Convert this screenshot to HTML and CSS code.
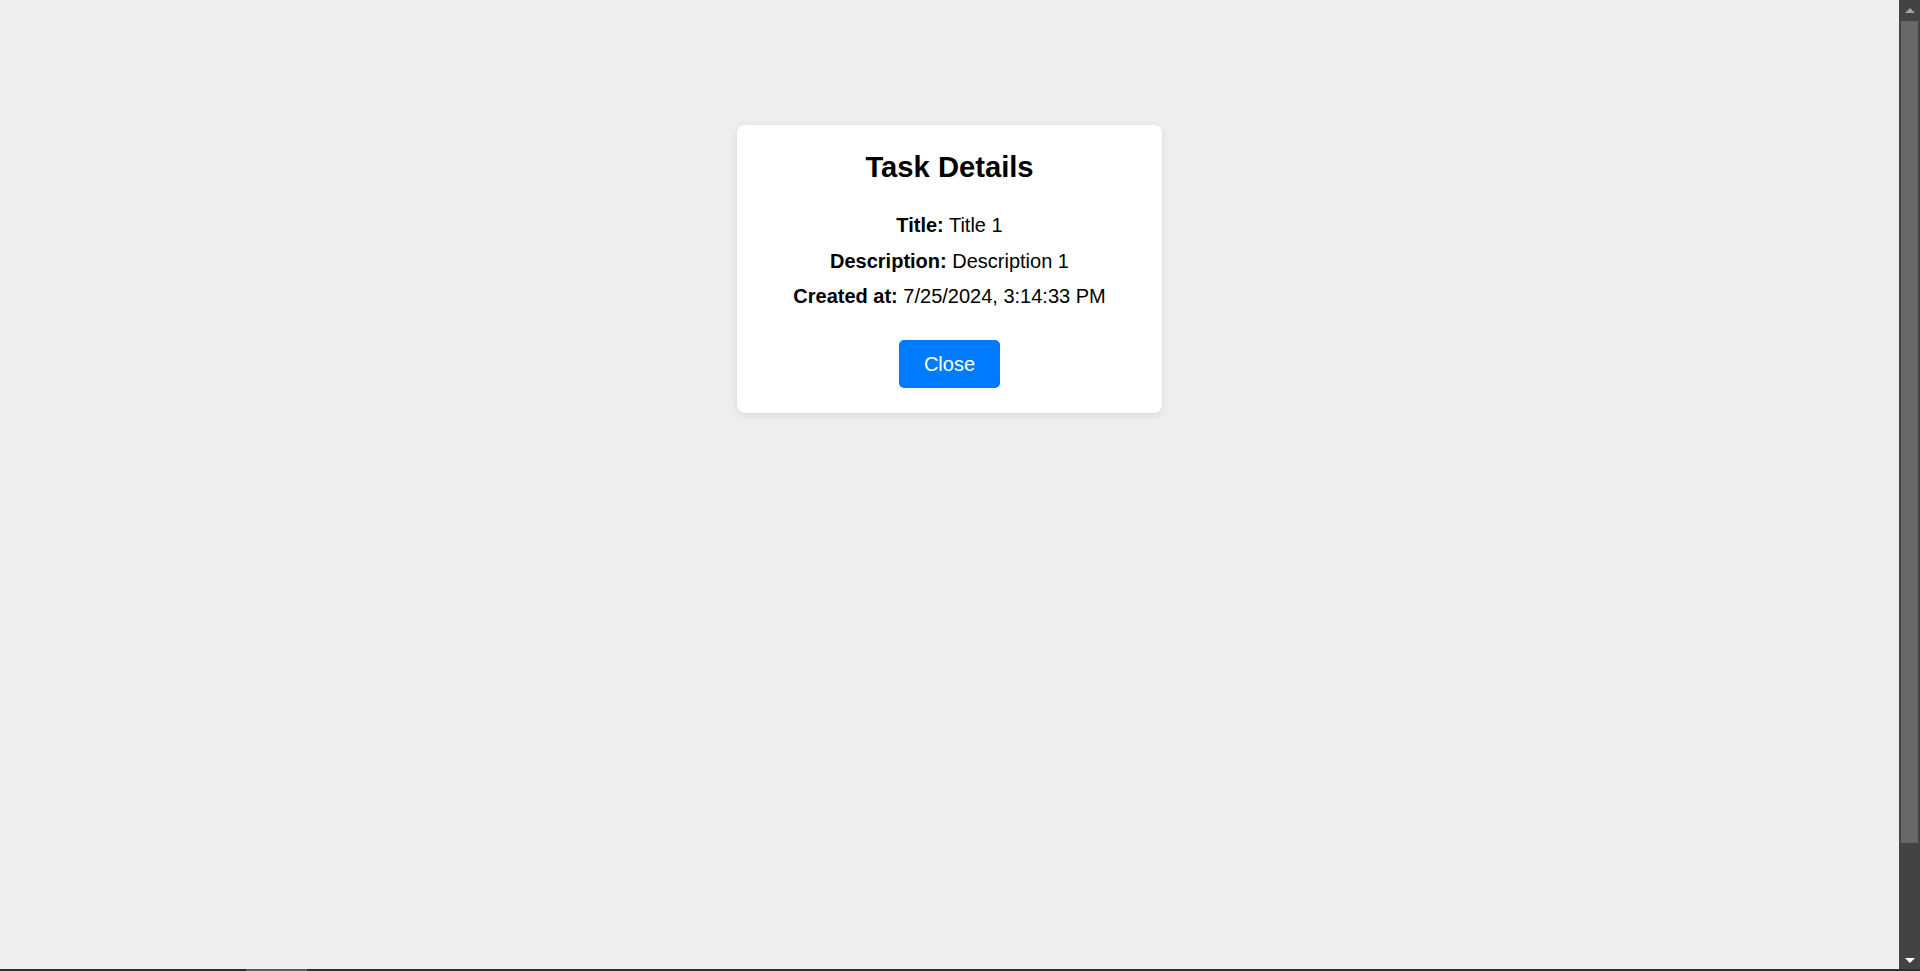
FILE: index.html
```html
<!DOCTYPE html>
<html lang="en">
<head>
<meta charset="utf-8">
<title>Task Details</title>
<link rel="stylesheet" href="styles.css">
</head>
<body>
<div class="frame">
  <div class="row">
    <main class="page">
      <div class="card">
        <h2 class="card-title">Task Details</h2>
        <div class="details">
          <p class="line"><strong>Title:</strong> Title 1</p>
          <p class="line"><strong>Description:</strong> Description 1</p>
          <p class="line"><strong>Created at:</strong> 7/25/2024, 3:14:33 PM</p>
        </div>
        <button class="btn" type="button">Close</button>
      </div>
    </main>
    <div class="vscroll">
      <div class="arrow-box"><span class="arrow up"></span></div>
      <div class="track">
        <div class="thumb"></div>
      </div>
      <div class="arrow-box"><span class="arrow down"></span></div>
    </div>
  </div>
  <div class="hscroll">
    <div class="hgap"></div>
    <div class="hthumb"></div>
  </div>
</div>
</body>
</html>
```
FILE: styles.css
```css
html, body {
  margin: 0;
  padding: 0;
  height: 100%;
  overflow: hidden;
}
body {
  font-family: "Liberation Sans", Arial, sans-serif;
  color: #000;
  background: #efefef;
}
.frame {
  display: flex;
  flex-direction: column;
  height: 971px;
}
.row {
  display: flex;
  height: 969px;
}
.page {
  flex: 1;
  background: #efefef;
  display: flex;
  justify-content: center;
  align-items: flex-start;
  padding-top: 125px;
}
.card {
  width: 425px;
  box-sizing: border-box;
  background: #fff;
  border-radius: 8px;
  box-shadow: 0 2px 10px rgba(0, 0, 0, 0.1);
  padding: 25.5px 20px 25px;
  text-align: center;
}
.card-title {
  margin: 0 0 24.7px;
  font-size: 29.2px;
  font-weight: bold;
  line-height: 33px;
}
.details {
  display: flex;
  flex-direction: column;
}
.line {
  margin: 0;
  font-size: 20px;
  line-height: 35.5px;
}
.btn {
  margin-top: 25.3px;
  display: inline-block;
  font-family: "Liberation Sans", Arial, sans-serif;
  font-size: 20px;
  line-height: 24px;
  padding: 12px 25px;
  color: #fff;
  background: #007bff;
  border: 0;
  border-radius: 5px;
}
.vscroll {
  width: 21px;
  background: #434343;
  display: flex;
  flex-direction: column;
}
.arrow-box {
  height: 21px;
  display: flex;
  align-items: center;
  justify-content: center;
}
.arrow {
  width: 0;
  height: 0;
  border-left: 5px solid transparent;
  border-right: 5px solid transparent;
}
.arrow.up {
  border-bottom: 5px solid #a3a3a3;
}
.arrow.down {
  border-top: 5px solid #ffffff;
  margin-top: 3px;
}
.track {
  flex: 1;
  padding: 0 2px;
}
.thumb {
  height: 822px;
  background: #686868;
}
.hscroll {
  height: 2px;
  background: #2e2e2e;
  display: flex;
}
.hgap {
  width: 246px;
}
.hthumb {
  width: 61px;
  background: #5c5c5c;
}
```
